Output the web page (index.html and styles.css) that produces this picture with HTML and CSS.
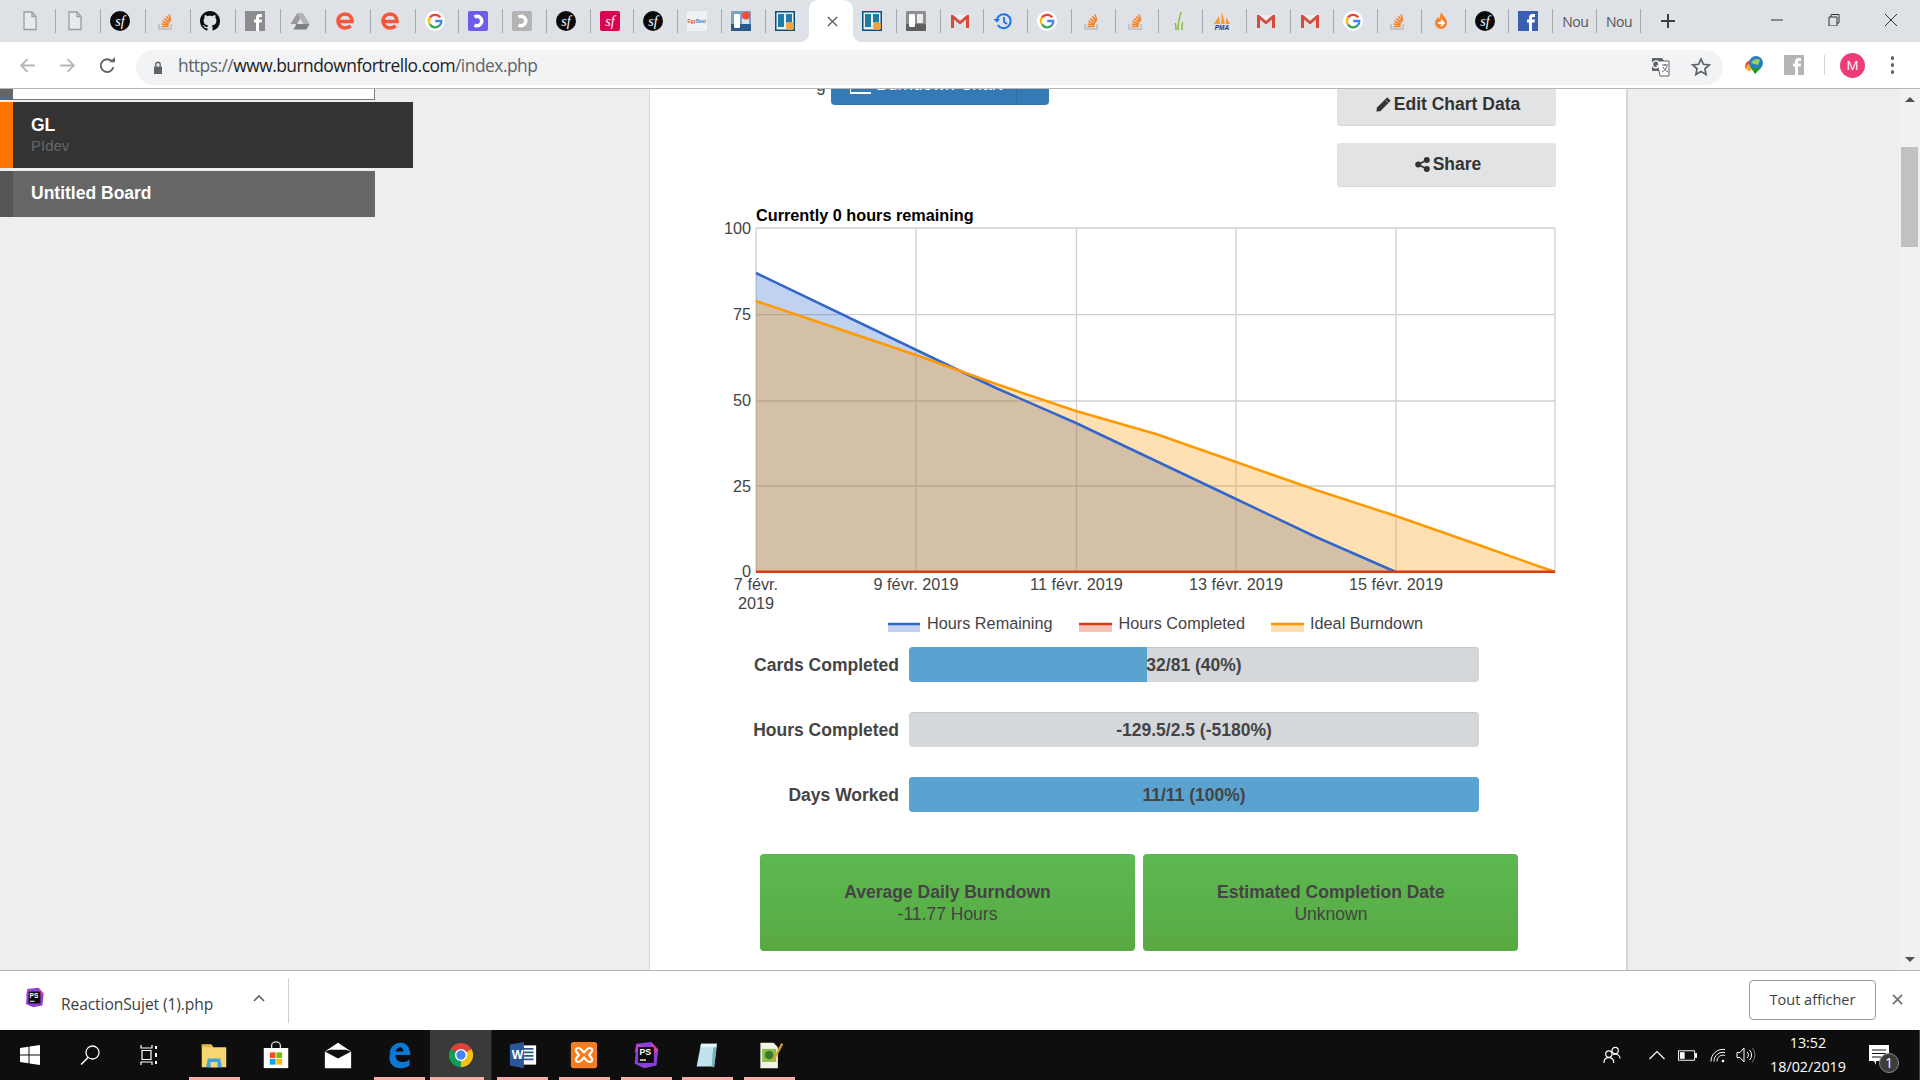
FILE: index.html
```html
<!DOCTYPE html>
<html lang="fr">
<head>
<meta charset="utf-8">
<title>Burndown for Trello</title>
<link rel="stylesheet" href="styles.css">
</head>
<body>
<svg class="defs" xmlns="http://www.w3.org/2000/svg">
  <symbol id="page" viewBox="0 0 20 20"><path d="M4 1h8l4 4.500V18.500H4z" fill="#e8eaed" stroke="#9a9da1" stroke-width="1.300"/><path d="M12 1v4.500h4" fill="none" stroke="#9a9da1" stroke-width="1.300"/></symbol>
  <symbol id="so" viewBox="0 0 20 20"><path d="M4 13v5h12v-5" fill="none" stroke="#bcbcbc" stroke-width="1.500"/><path d="M6.500 15.500h7M6.700 13l6.800 1M7.500 10.300l6.300 2.800M9 7.700l5.500 4M11.300 5.300l4 5.300M14 3.500l1.800 6" stroke="#f48024" stroke-width="1.500" fill="none"/></symbol>
  <symbol id="gh" viewBox="0 0 16 16"><path fill="#0d0d0d" d="M8 0C3.580 0 0 3.580 0 8c0 3.540 2.290 6.530 5.470 7.590.4.07.55-.17.55-.38 0-.19-.01-.82-.01-1.490-2.010.37-2.530-.49-2.690-.94-.09-.23-.48-.94-.82-1.130-.28-.15-.68-.52-.01-.53.63-.01 1.080.58 1.230.82.72 1.210 1.870.87 2.330.66.07-.52.28-.87.51-1.070-1.780-.2-3.640-.89-3.640-3.950 0-.87.31-1.590.82-2.150-.08-.2-.36-1.020.08-2.120 0 0 .67-.21 2.200.82.64-.18 1.320-.27 2-.27.68 0 1.360.09 2 .27 1.530-1.040 2.200-.82 2.200-.82.44 1.100.16 1.920.08 2.120.51.56.82 1.270.82 2.150 0 3.070-1.870 3.750-3.650 3.950.29.25.54.73.54 1.480 0 1.070-.01 1.930-.01 2.200 0 .21.15.46.55.38A8.013 8.013 0 0016 8c0-4.420-3.580-8-8-8z"/></symbol>
  <symbol id="fgray" viewBox="0 0 20 20"><rect width="20" height="20" fill="#8c8c8c"/><path fill="#fff" d="M11 20v-8.500H9V8.500h2V6.500C11 4 12.500 3 14.500 3H17v3h-1.500c-1 0-1.500.4-1.500 1.300v1.200h3l-.5 3H14V20z"/></symbol>
  <symbol id="flight" viewBox="0 0 20 20"><rect width="20" height="20" fill="#b5b5b5"/><path fill="#fff" d="M11 20v-8.500H9V8.500h2V6.500C11 4 12.500 3 14.500 3H17v3h-1.500c-1 0-1.500.4-1.500 1.300v1.200h3l-.5 3H14V20z"/></symbol>
  <symbol id="fblue" viewBox="0 0 20 20"><rect width="20" height="20" fill="#3b5fb0"/><path fill="#fff" d="M11 20v-8.500H9V8.500h2V6.500C11 4 12.500 3 14.500 3H17v3h-1.500c-1 0-1.500.4-1.500 1.300v1.200h3l-.5 3H14V20z"/></symbol>
  <symbol id="drive" viewBox="0 0 20 20"><path d="M7 2.500h6L7 13H0.500z" fill="#9a9a9a"/><path d="M7 2.500h6L19.500 13h-6z" fill="#b3b3b3"/><path d="M3.500 18.500L6.500 13h13l-3 5.500z" fill="#7f7f7f"/></symbol>
  <symbol id="e" viewBox="0 0 20 20"><path d="M3.500 10.500h13.500c0-4.500-3-7.500-7-7.500s-7 3-7 7 3 7 7 7c2.300 0 4.200-.8 5.700-2.300" fill="none" stroke="#f6573a" stroke-width="3.600"/></symbol>
  <symbol id="g" viewBox="0 0 20 20"><circle cx="10" cy="10" r="10" fill="#fff"/><path d="M15.200 6.400A6.300 6.300 0 0 0 5 6.500" fill="none" stroke="#ea4335" stroke-width="2.300"/><path d="M5 6.500a6.300 6.300 0 0 0 0 7" fill="none" stroke="#fbbc05" stroke-width="2.300"/><path d="M5 13.500a6.300 6.300 0 0 0 10 .6" fill="none" stroke="#34a853" stroke-width="2.300"/><path d="M15 14.100a6.300 6.300 0 0 0 1.300-4.100H10.200" fill="none" stroke="#4285f4" stroke-width="2.300"/></symbol>
  <symbol id="dp" viewBox="0 0 20 20"><rect width="20" height="20" rx="2" fill="#6d5ce8"/><path d="M6.500 6a4.700 4.700 0 1 1 0 8" fill="none" stroke="#fff" stroke-width="3.400"/></symbol>
  <symbol id="dpgray" viewBox="0 0 20 20"><rect width="20" height="20" rx="2" fill="#b3b3b3"/><path d="M6.500 6a4.700 4.700 0 1 1 0 8" fill="none" stroke="#fff" stroke-width="3.400"/></symbol>
  <symbol id="tphoto" viewBox="0 0 20 20"><rect width="20" height="20" fill="#7fa3bf"/><rect y="13" width="20" height="7" fill="#2a5a8a"/><rect x="3" y="3" width="6" height="14" rx="1" fill="#fff"/><rect x="11" y="7" width="7" height="6" fill="#d5e3ee"/><circle cx="15" cy="4.500" r="4" fill="#ef4d3c"/></symbol>
  <symbol id="tblue" viewBox="0 0 20 20"><rect width="20" height="20" fill="#0c4f75"/><rect x="1.500" y="1.500" width="17" height="17" fill="#e8eef2"/><rect x="3" y="3" width="6" height="13" fill="#1f7aa8"/><rect x="11" y="3" width="6" height="8.500" fill="#1f7aa8"/><circle cx="15" cy="15" r="4" fill="#f3a13c"/></symbol>
  <symbol id="tgray" viewBox="0 0 20 20"><rect width="20" height="20" rx="1" fill="#8f8f8f"/><rect y="13" width="20" height="7" rx="1" fill="#5f5f5f"/><rect x="3" y="3" width="6" height="13" rx="1" fill="#fff"/><rect x="11" y="3" width="6" height="9" rx="1" fill="#eee"/></symbol>
  <symbol id="gm" viewBox="0 0 20 20"><path d="M1 4h2l7 6 7-6h2v13h-3V8.500l-6 5-6-5V17H1z" fill="#d54b3d"/><path d="M4 4h12l-6 5z" fill="#f0efee"/></symbol>
  <symbol id="hist" viewBox="0 0 20 20"><path d="M4 8a7 7 0 1 1 .8 6" fill="none" stroke="#1a73e8" stroke-width="2"/><path d="M0.500 8H7L4 11.500z" fill="#1a73e8"/><path d="M11 6v5l3 2" fill="none" stroke="#1a73e8" stroke-width="1.800"/></symbol>
  <symbol id="leaf" viewBox="0 0 20 20"><path d="M13 1c-1.500 5-3 9-3 18M8 19c.3-3 0-5-1-7M14 19c0-3 0-5 .5-8" fill="none" stroke="#8fba4a" stroke-width="1.500"/></symbol>
  <symbol id="drop" viewBox="0 0 20 20"><path d="M10 1c1 3 6 6 6 11a6 6 0 0 1-12 0c0-3 2-4 3-6 1 1 1 2 1.500 2C9 6 9.500 3 10 1z" fill="#f5832a"/><path d="M7 12h5M10 9l3 3-3 3" fill="none" stroke="#fff" stroke-width="1.800"/></symbol>
  <symbol id="ps-bg" viewBox="0 0 32 32"><path d="M5 3l17-2 8 9-2 18-14 3-11-5z" fill="#8a3fd6"/><path d="M22 1l8 9-6 4z" fill="#e23fa0"/><path d="M3 14l2-11 8 3z" fill="#c23fd0"/><rect x="7" y="7" width="18" height="18" fill="#0c0c0c"/><rect x="9" y="21" width="7" height="1.500" fill="#fff"/></symbol>
  <symbol id="chrome" viewBox="0 0 32 32"><path d="M16 16L4 9a14 14 0 0 1 24 0z" fill="#db4437"/><path d="M16 16l12-7a14 14 0 0 1-12 21z" fill="#f4c20d"/><path d="M16 16v14A14 14 0 0 1 4 9z" fill="#0f9d58"/><circle cx="16" cy="16" r="7" fill="#fff"/><circle cx="16" cy="16" r="5.300" fill="#4285f4"/></symbol>
  <symbol id="folder" viewBox="0 0 32 32"><path d="M2 4h11l2 3h15v23H2z" fill="#f6d66f"/><path d="M2 4h11l2 3H2z" fill="#e3b94c"/><path d="M9 20h14l2 10H7z" fill="#3aa6dd"/><rect x="12" y="24" width="8" height="6" fill="#f6d66f"/></symbol>
  <symbol id="store" viewBox="0 0 32 32"><path d="M2 8h28v23H2z" fill="#fff"/><path d="M11 8V5a5 4 0 0 1 10 0v3" fill="none" stroke="#ddd" stroke-width="1.500"/><rect x="9" y="13" width="6.500" height="6.500" fill="#f25022"/><rect x="16.500" y="13" width="6.500" height="6.500" fill="#7fba00"/><rect x="9" y="20.500" width="6.500" height="6.500" fill="#00a4ef"/><rect x="16.500" y="20.500" width="6.500" height="6.500" fill="#ffb900"/></symbol>
  <symbol id="mail" viewBox="0 0 32 32"><path d="M1 12L16 2l15 10v19H1z" fill="#fff"/><path d="M1 12l15 8 15-8-6-2H7z" fill="#0e0e0e"/><path d="M8 11h16l-8 6z" fill="#0e0e0e"/></symbol>
  <symbol id="edge" viewBox="0 0 32 32"><path d="M5 14C6 7 11 2 18 2c7 0 11 6 11 14H12c0 5 3 8 8 8 3 0 6-1 8-3v7c-3 2-6 3-10 3-8 0-13-5-13-12 0-2 .5-4 2-6-2 1-2 1-2 1zm7-2h9c0-3-2-5-4-5s-4 2-5 5z" fill="#0a78d4"/></symbol>
  <symbol id="word-bg" viewBox="0 0 32 32"><rect x="11" y="5" width="20" height="22" fill="#fff"/><path d="M14 9h14M14 13h14M14 17h14M14 21h14" stroke="#2b579a" stroke-width="2"/><path d="M1 4l16-3v30L1 28z" fill="#2b579a"/></symbol>
  <symbol id="xampp" viewBox="0 0 32 32"><rect x="1" y="1" width="30" height="30" rx="3" fill="#f57c20"/><path d="M10 8c-3 0-4 2-3 4l3 4-3 4c-1 2 0 4 3 4 2 0 3-2 6-5 3 3 4 5 6 5 3 0 4-2 3-4l-3-4 3-4c1-2 0-4-3-4-2 0-3 2-6 5-3-3-4-5-6-5z" fill="none" stroke="#fff" stroke-width="2.500"/></symbol>
  <symbol id="note" viewBox="0 0 32 32"><path d="M8 3h18l-3 26H3z" fill="#bfe4ee"/><path d="M8 3h18l-.5 4H7.500z" fill="#e8f3f5"/><path d="M22 7l4 0-3 23-3-1z" fill="#7ab0c2"/></symbol>
  <symbol id="last" viewBox="0 0 32 32"><path d="M5 2h15l5 5v24H5z" fill="#f2f2e8"/><rect x="7" y="9" width="16" height="15" fill="#8cc152"/><circle cx="15" cy="16" r="5" fill="#3a7a2a"/><path d="M20 22L30 3" stroke="#e0a020" stroke-width="2.500"/></symbol>
</svg>

<header class="tabstrip">
  <div class="tab wide"><svg class="fav"><use href="#page"/></svg></div>
  <div class="tab wide"><svg class="fav"><use href="#page"/></svg></div>
  <div class="tab wide"><svg class="fav" viewBox="0 0 20 20"><circle cx="10" cy="10" r="10" fill="#0a0a0a"/><text x="10" y="14.500" class="logo-sf">sf</text></svg></div>
  <div class="tab wide"><svg class="fav"><use href="#so"/></svg></div>
  <div class="tab wide"><svg class="fav"><use href="#gh"/></svg></div>
  <div class="tab wide"><svg class="fav"><use href="#fgray"/></svg></div>
  <div class="tab wide"><svg class="fav"><use href="#drive"/></svg></div>
  <div class="tab wide"><svg class="fav"><use href="#e"/></svg></div>
  <div class="tab wide"><svg class="fav"><use href="#e"/></svg></div>
  <div class="tab"><svg class="fav"><use href="#g"/></svg></div>
  <div class="tab"><svg class="fav"><use href="#dp"/></svg></div>
  <div class="tab"><svg class="fav"><use href="#dpgray"/></svg></div>
  <div class="tab"><svg class="fav" viewBox="0 0 20 20"><circle cx="10" cy="10" r="10" fill="#0a0a0a"/><text x="10" y="14.500" class="logo-sf">sf</text></svg></div>
  <div class="tab"><svg class="fav" viewBox="0 0 20 20"><rect width="20" height="20" rx="2" fill="#d9044f"/><text x="10" y="14.500" class="logo-sf">sf</text></svg></div>
  <div class="tab"><svg class="fav" viewBox="0 0 20 20"><circle cx="10" cy="10" r="10" fill="#0a0a0a"/><text x="10" y="14.500" class="logo-sf">sf</text></svg></div>
  <div class="tab"><svg class="fav" viewBox="0 0 20 20"><rect width="20" height="20" fill="#eef2f5"/><text x="0.500" y="11.500" class="logo-egy"><tspan fill="#e0542e">Egy</tspan><tspan fill="#2a83b8">Best</tspan></text></svg></div>
  <div class="tab"><svg class="fav"><use href="#tphoto"/></svg></div>
  <div class="tab nosep"><svg class="fav"><use href="#tblue"/></svg></div>
  <div class="tab-active"><svg class="x-mark" viewBox="0 0 12 12"><path d="M1 1l10 10M11 1L1 11"/></svg></div>
  <div class="tab"><svg class="fav"><use href="#tblue"/></svg></div>
  <div class="tab"><svg class="fav"><use href="#tgray"/></svg></div>
  <div class="tab"><svg class="fav"><use href="#gm"/></svg></div>
  <div class="tab"><svg class="fav"><use href="#hist"/></svg></div>
  <div class="tab"><svg class="fav"><use href="#g"/></svg></div>
  <div class="tab"><svg class="fav"><use href="#so"/></svg></div>
  <div class="tab"><svg class="fav"><use href="#so"/></svg></div>
  <div class="tab"><svg class="fav"><use href="#leaf"/></svg></div>
  <div class="tab"><svg class="fav" viewBox="0 0 20 20"><path d="M2 13L7 5l1 8zM9 13l1-12 3 12zM14 13l0-7 4 7z" fill="#f29a30"/><text x="10" y="19" class="logo-pma">PMA</text></svg></div>
  <div class="tab"><svg class="fav"><use href="#gm"/></svg></div>
  <div class="tab"><svg class="fav"><use href="#gm"/></svg></div>
  <div class="tab"><svg class="fav"><use href="#g"/></svg></div>
  <div class="tab"><svg class="fav"><use href="#so"/></svg></div>
  <div class="tab"><svg class="fav"><use href="#drop"/></svg></div>
  <div class="tab"><svg class="fav" viewBox="0 0 20 20"><circle cx="10" cy="10" r="10" fill="#0a0a0a"/><text x="10" y="14.500" class="logo-sf">sf</text></svg></div>
  <div class="tab"><svg class="fav"><use href="#fblue"/></svg></div>
  <div class="tab"><span class="tab-title">Nou</span></div>
  <div class="tab"><span class="tab-title">Nou</span></div>
  <div class="newtab"><svg viewBox="0 0 14 14"><path d="M7 0v14M0 7h14"/></svg></div>
  <div class="winctl">
    <div class="winbtn"><svg viewBox="0 0 12 12"><path d="M0 6h12"/></svg></div>
    <div class="winbtn"><svg viewBox="0 0 12 12"><path d="M1 3h8v9H1zM3 3V0.500h8V9H9"/></svg></div>
    <div class="winbtn"><svg viewBox="0 0 12 12"><path d="M0 0l12 12M12 0L0 12"/></svg></div>
  </div>
</header>

<div class="toolbar">
  <div class="navbtn"><svg viewBox="0 0 16 16"><path class="nav-off" d="M15 8H2M8 2L2 8l6 6"/></svg></div>
  <div class="navbtn"><svg viewBox="0 0 16 16"><path class="nav-off" d="M1 8h13M8 2l6 6-6 6"/></svg></div>
  <div class="navbtn"><svg viewBox="0 0 16 16"><path class="nav-on" d="M13.500 9.500A6 6 0 1 1 12 4"/><path class="nav-fill" d="M10 5h5V0z"/></svg></div>
  <div class="omnibox">
    <svg class="lock" viewBox="0 0 10 13"><path d="M1 5.500h8V13H1z"/><path class="lock-bow" d="M2.800 5.500V3.500a2.200 2.200 0 0 1 4.400 0v2"/></svg>
    <div class="url"><span class="url-dim">https://</span>www.burndownfortrello.com<span class="url-dim">/index.php</span></div>
    <div class="omni-icon"><svg viewBox="0 0 20 20"><path d="M1 1h10l2 3v10H1z" fill="#5f6368"/><path d="M6 4h12v15H9z" fill="#fff" stroke="#5f6368"/><path d="M9.500 5a3.500 3.500 0 1 0 .6 4H7.500" fill="none" stroke="#fff" stroke-width="1.300" transform="translate(-2 0)"/><path d="M11 8h6M14 7v2M16 9c-1 3-3 5-5 6M12 10c1 2 3 4 5 5" stroke="#5f6368" fill="none"/></svg></div>
    <div class="omni-icon"><svg viewBox="0 0 20 20"><path d="M10 2l2.400 5.300 5.800.6-4.300 3.900 1.200 5.700-5.100-2.900-5.100 2.900 1.200-5.700L1.800 7.900l5.800-.6z" fill="none" stroke="#5f6368" stroke-width="1.700"/></svg></div>
  </div>
  <div class="ext"><svg viewBox="0 0 20 20"><path d="M1 12a8 7 0 0 1 6-7l2 7-3 4a6 6 0 0 1-5-4z" fill="#e04c3c"/><path d="M2 14a7 6 0 0 1 5-6l2 5-4 3z" fill="#f5b52e"/><circle cx="12" cy="8" r="7" fill="#2c7fc0"/><path d="M7 8c2-4 7-5 9-3l-2 5z" fill="#9ad06a"/><path d="M7 13h10l-6 6z" fill="#1c9a2a"/></svg></div>
  <div class="ext"><svg class="ext-f"><use href="#flight"/></svg></div>
  <div class="tb-sep"></div>
  <div class="avatar">M</div>
  <div class="dots"><span></span><span></span><span></span></div>
</div>

<main class="page">
  <aside class="sidebar">
    <div class="board-stub"><span class="stub-edge"></span><span class="stub-body"></span></div>
    <div class="board board-on">
      <strong>GL</strong>
      <span class="board-sub">PIdev</span>
    </div>
    <div class="board board-off"><strong>Untitled Board</strong></div>
  </aside>

  <section class="panel">
    <div class="top-row">
      <span class="clipped-g">g</span>
      <div class="split-btn">
        <div class="split-main"><span class="chart-glyph"></span>Burndown Chart</div>
        <div class="split-caret"></div>
      </div>
      <div class="action-col">
        <div class="action-btn action-edit"><svg viewBox="0 0 14 14"><path d="M10.500 0L14 3.500 4 13.500 0 14l.5-4zM9 3l2.500 2.500" fill="#333" stroke="#e2e3e5" stroke-width=".6"/></svg>Edit Chart Data</div>
        <div class="action-btn action-share"><svg viewBox="0 0 14 14"><circle cx="3" cy="7" r="2.800"/><circle cx="11" cy="2.800" r="2.800"/><circle cx="11" cy="11.200" r="2.800"/><path d="M3 7l8-4.200M3 7l8 4.200" stroke="#333" stroke-width="1.500"/></svg>Share</div>
      </div>
    </div>

    <svg class="chart" viewBox="650 188 977 450" xmlns="http://www.w3.org/2000/svg">
      <text x="756" y="221" class="c-title">Currently 0 hours remaining</text>
      <g class="c-grid">
        <path d="M756 228H1555M756 314.600H1555M756 401H1555M756 486H1555"/>
        <path d="M756 228V572M916 228V572M1076.500 228V572M1236 228V572M1396 228V572M1555 228V572"/>
      </g>
      <polygon class="a-blue" points="756,273 956,369 996,388 1076,423 1156,461 1236,499 1316,537 1396,572 756,572"/>
      <polygon class="a-orange" points="756,301 836,328 916,355 996,384 1076,411 1156,434 1236,462 1316,490 1396,516 1476,544 1555,572 756,572"/>
      <polyline class="l-blue" points="756,273 956,369 996,388 1076,423 1156,461 1236,499 1316,537 1396,572"/>
      <polyline class="l-orange" points="756,301 836,328 916,355 996,384 1076,411 1156,434 1236,462 1316,490 1396,516 1476,544 1555,572"/>
      <path class="l-red" d="M756 571.700H1555"/>
      <g class="c-yaxis">
        <text x="751" y="234">100</text>
        <text x="751" y="320">75</text>
        <text x="751" y="406">50</text>
        <text x="751" y="492">25</text>
        <text x="751" y="577">0</text>
      </g>
      <g class="c-xaxis">
        <text x="756" y="590">7 févr.</text>
        <text x="756" y="609">2019</text>
        <text x="916" y="590">9 févr. 2019</text>
        <text x="1076.500" y="590">11 févr. 2019</text>
        <text x="1236" y="590">13 févr. 2019</text>
        <text x="1396" y="590">15 févr. 2019</text>
      </g>
      <g class="c-legend">
        <rect x="888" y="623" width="32" height="9" class="sw-blue"/><path d="M888 624H920" class="l-blue"/>
        <text x="927" y="629">Hours Remaining</text>
        <rect x="1079" y="623" width="33" height="9" class="sw-red"/><path d="M1079 624H1112" class="l-red"/>
        <text x="1118.500" y="629">Hours Completed</text>
        <rect x="1271" y="623" width="33" height="9" class="sw-orange"/><path d="M1271 624H1304" class="l-orange"/>
        <text x="1310" y="629">Ideal Burndown</text>
      </g>
    </svg>

    <div class="stats">
      <div class="stat-row">
        <div class="stat-label">Cards Completed</div>
        <div class="stat-bar"><div class="stat-fill" style="width:41.7%"></div><div class="stat-text">32/81 (40%)</div></div>
      </div>
      <div class="stat-row">
        <div class="stat-label">Hours Completed</div>
        <div class="stat-bar"><div class="stat-text">-129.5/2.5 (-5180%)</div></div>
      </div>
      <div class="stat-row">
        <div class="stat-label">Days Worked</div>
        <div class="stat-bar"><div class="stat-fill" style="width:100%"></div><div class="stat-text">11/11 (100%)</div></div>
      </div>
    </div>

    <div class="tiles">
      <div class="tile"><strong>Average Daily Burndown</strong><span>-11.77 Hours</span></div>
      <div class="tile"><strong>Estimated Completion Date</strong><span>Unknown</span></div>
    </div>
  </section>

  <div class="gutter"></div>

  <div class="scrollbar">
    <div class="sb-arrow sb-up"></div>
    <div class="sb-thumb"></div>
    <div class="sb-arrow sb-down"></div>
  </div>
</main>

<div class="downloads">
  <div class="dl-item">
    <svg class="dl-icon" viewBox="0 0 32 32"><use href="#ps-bg"/><text x="8.500" y="16.500" class="logo-ps">PS</text></svg>
    <span class="dl-name">ReactionSujet (1).php</span>
    <svg class="dl-chev" viewBox="0 0 12 8"><path d="M1 7l5-5 5 5"/></svg>
  </div>
  <div class="dl-sep"></div>
  <div class="dl-all">Tout afficher</div>
  <div class="dl-close"><svg viewBox="0 0 12 12"><path d="M1 1l10 10M11 1L1 11"/></svg></div>
</div>

<footer class="taskbar">
  <div class="tk-sys"><svg viewBox="0 0 20 20"><path d="M0 3l8.500-1.200V9.500H0zM9.500 1.600L20 0v9.500H9.500zM0 10.500h8.500v7.700L0 17zM9.500 10.500H20V20l-10.500-1.600z" fill="#fff"/></svg></div>
  <div class="tk-sys"><svg viewBox="0 0 20 20"><circle cx="12.500" cy="7.500" r="6.500" fill="none" stroke="#fff" stroke-width="1.300"/><path d="M8 12.500L1 19.500" stroke="#fff" stroke-width="1.500"/></svg></div>
  <div class="tk-sys"><svg viewBox="0 0 20 20"><path d="M1 0v3h11V0M2 5.500h9v9H2zM1 20v-3h11v3" fill="none" stroke="#fff" stroke-width="1.200"/><path d="M16 1v3M16 8v4M16 16v3" stroke="#fff" stroke-width="2"/></svg></div>
  <div class="tk-app open"><svg><use href="#folder"/></svg></div>
  <div class="tk-app"><svg><use href="#store"/></svg></div>
  <div class="tk-app"><svg><use href="#mail"/></svg></div>
  <div class="tk-app open"><svg><use href="#edge"/></svg></div>
  <div class="tk-app open active"><svg><use href="#chrome"/></svg></div>
  <div class="tk-app open"><svg viewBox="0 0 32 32"><use href="#word-bg"/><text x="3" y="21" class="logo-w">W</text></svg></div>
  <div class="tk-app open"><svg><use href="#xampp"/></svg></div>
  <div class="tk-app open"><svg viewBox="0 0 32 32"><use href="#ps-bg"/><text x="8.500" y="16.500" class="logo-ps">PS</text></svg></div>
  <div class="tk-app open"><svg><use href="#note"/></svg></div>
  <div class="tk-app open"><svg><use href="#last"/></svg></div>
  <div class="tray">
    <div class="tr-people"><svg viewBox="0 0 20 20"><circle cx="13.500" cy="5" r="3.500"/><circle cx="6.500" cy="9" r="3.500"/><path d="M1 19c0-3.500 2-6 5.500-6s5.500 2.500 5.500 6M11 9.500c1-.5 1.500-.5 2.500-.5 3 0 5.500 2 5.500 5"/></svg></div>
    <div class="tr-chev"><svg viewBox="0 0 16 10"><path d="M0.500 9L8 1.500 15.500 9"/></svg></div>
    <div class="tr-batt"><svg viewBox="0 0 20 11"><path class="bt-o" d="M0.500 0.500h17v10H.5z"/><rect x="2" y="2" width="5" height="7"/><rect x="18" y="3" width="2" height="5"/></svg></div>
    <div class="tr-wifi"><svg viewBox="0 0 16 14"><path d="M1 13a12 12 0 0 1 14-12M4 13a9 9 0 0 1 11-9M7 13a6 6 0 0 1 8-6"/><circle cx="13" cy="12.500" r="1.300"/></svg></div>
    <div class="tr-snd"><svg viewBox="0 0 20 16"><path d="M1 5.500h3L8 1v14l-4-4.500H1z"/><path d="M11 5a4 4 0 0 1 0 6M13.500 3a7 7 0 0 1 0 10"/><path class="snd-dim" d="M16 0.500a11 11 0 0 1 0 15"/></svg></div>
    <div class="clock"><span>13:52</span><span>18/02/2019</span></div>
    <div class="tr-notif">
      <svg viewBox="0 0 22 22"><path d="M1 1h20v16H8v4l-2-4H1z" fill="#fff"/><path d="M4 6h14M4 9.500h14M4 13h9" stroke="#111" stroke-width="1"/></svg>
      <span class="badge">1</span>
    </div>
    <div class="tr-peek"></div>
  </div>
</footer>
</body>
</html>
```

FILE: styles.css
```css
* { box-sizing: border-box; }
html, body { margin: 0; padding: 0; }
body {
  width: 1920px;
  height: 1080px;
  overflow: hidden;
  display: flex;
  flex-direction: column;
  font-family: "Liberation Sans", Arial, sans-serif;
  background: #fff;
}
.defs { display: block; width: 0; height: 0; flex: none; overflow: hidden; }
.logo-sf { font: italic 14px "Liberation Serif", serif; fill: #fff; text-anchor: middle; }
.logo-egy { font: bold 4.600px "Liberation Sans", sans-serif; }
.logo-pma { font: italic bold 6.500px "Liberation Sans", sans-serif; fill: #2c3470; text-anchor: middle; }
.logo-ps { font: bold 10px "Liberation Sans", sans-serif; fill: #fff; }
.logo-w { font: bold 14px "Liberation Sans", sans-serif; fill: #fff; }

/* tab strip */
.tabstrip {
  flex: none;
  height: 42px;
  background: #dee1e6;
  display: flex;
  padding-left: 10.700px;
}
.tab {
  flex: none;
  width: 43.750px;
  height: 42px;
  display: flex;
  align-items: center;
  justify-content: space-between;
  padding-left: 9px;
}
.tab.wide { width: 45px; }
.tab::after {
  content: "";
  flex: none;
  width: 1px;
  height: 24px;
  background: #a6a9ad;
}
.tab.nosep::after { background: transparent; }
.fav { flex: none; width: 20px; height: 20px; }
.tab-title {
  flex: none;
  width: 26px;
  white-space: nowrap;
  font: 14px "Open Sans", sans-serif;
  letter-spacing: -0.500px;
  color: #555;
}
.tab-active {
  flex: none;
  position: relative;
  width: 43.750px;
  height: 42px;
  background: #fff;
  border-radius: 9px 9px 0 0;
  display: flex;
  align-items: center;
  justify-content: center;
}
.tab-active::before, .tab-active::after {
  content: "";
  position: absolute;
  bottom: 0;
  width: 8px;
  height: 8px;
}
.tab-active::before { left: -8px; background: radial-gradient(circle at 0 0, transparent 7.500px, #fff 8px); }
.tab-active::after { right: -8px; background: radial-gradient(circle at 100% 0, transparent 7.500px, #fff 8px); }
.x-mark { width: 11px; height: 11px; fill: none; stroke: #5f6368; stroke-width: 1.500; margin-left: 2px; }
.newtab { flex: none; width: 52px; margin-left: 1px; display: flex; align-items: center; justify-content: center; }
.newtab svg { width: 14px; height: 14px; fill: none; stroke: #3c4043; stroke-width: 2; }
.winctl { margin-left: auto; display: flex; margin-right: 1px; }
.winbtn { width: 56.700px; display: flex; align-items: center; justify-content: center; padding-bottom: 3px; }
.winbtn svg { width: 12px; height: 12px; fill: none; stroke: #333; stroke-width: 1; }

/* toolbar */
.toolbar {
  flex: none;
  height: 46px;
  background: #fff;
  display: flex;
  align-items: center;
  padding-left: 7px;
}
.navbtn { flex: none; width: 40px; height: 46px; display: flex; align-items: center; justify-content: center; }
.navbtn svg { width: 17px; height: 17px; }
.nav-off { fill: none; stroke: #b4b6b9; stroke-width: 1.700; }
.nav-on { fill: none; stroke: #5f6368; stroke-width: 1.800; }
.nav-fill { fill: #5f6368; }
.omnibox {
  flex: none;
  width: 1587px;
  height: 35px;
  margin-left: 9px;
  margin-top: 5px;
  margin-bottom: 1px;
  border-radius: 18px;
  background: #f1f3f4;
  display: flex;
  align-items: center;
  padding-left: 17px;
  padding-right: 2px;
}
.lock { flex: none; width: 10px; height: 13px; fill: #5f6368; }
.lock-bow { fill: none; stroke: #5f6368; stroke-width: 1.400; }
.url {
  margin-left: 15px;
  margin-top: -5px;
  font: 17.400px "Open Sans", sans-serif;
  letter-spacing: -0.510px;
  color: #202124;
  white-space: nowrap;
}
.url-dim { color: #5f6368; }
.omni-icon { flex: none; width: 40px; display: flex; justify-content: center; }
.url + .omni-icon { margin-left: auto; }
.omni-icon svg { width: 20px; height: 20px; }
.ext { flex: none; width: 40px; display: flex; justify-content: center; }
.omnibox + .ext { margin-left: 11px; }
.ext svg { width: 20px; height: 20px; }
.tb-sep { flex: none; width: 1px; height: 20px; margin: 0 15.500px 0 9.500px; background: #d5d6d8; }
.avatar {
  flex: none;
  width: 25px;
  height: 25px;
  border-radius: 50%;
  background: #ec3d7a;
  color: #fff;
  font: 13.500px "Open Sans", sans-serif;
  display: flex;
  align-items: center;
  justify-content: center;
}
.dots { flex: none; margin-left: 25.500px; display: flex; flex-direction: column; gap: 3.500px; }
.dots span { width: 3.500px; height: 3.500px; border-radius: 50%; background: #5f6368; }

/* page */
.page {
  flex: none;
  height: 882px;
  display: flex;
  overflow: hidden;
  background: #eee;
  border-top: 1px solid #b6b6b6;
}
.sidebar { flex: none; width: 649px; display: flex; flex-direction: column; align-items: flex-start; }
.board-stub { width: 375px; height: 11px; display: flex; }
.stub-edge { width: 13px; background: #666; }
.stub-body { flex: 1; background: #fff; border-right: 1px solid #777; border-bottom: 1px solid #777; }
.board { color: #fff; font-size: 17.500px; line-height: 22px; }
.board strong { display: block; }
.board-on {
  width: 413px;
  height: 66px;
  margin-top: 2px;
  padding-top: 12px;
  padding-left: 18px;
  background: #333;
  border-left: 13px solid #ff7300;
}
.board-sub { display: block; font-size: 15px; line-height: 19px; color: #666; }
.board-off {
  width: 375px;
  height: 46px;
  margin-top: 3px;
  padding-left: 18px;
  padding-top: 11px;
  background: #666;
  border-left: 13px solid #555;
}

.panel {
  flex: none;
  width: 979px;
  background: #fff;
  border-left: 1px solid #d8d8d8;
  border-right: 2px solid #d8d8d8;
  display: flex;
  flex-direction: column;
}
.top-row { flex: none; height: 99px; display: flex; align-items: flex-start; }
.clipped-g { flex: none; width: 17px; margin-left: 166px; margin-top: -14px; font-size: 17.500px; line-height: 20px; color: #444; }
.split-btn {
  flex: none;
  display: flex;
  width: 218px;
  height: 46px;
  margin-top: -30px;
  margin-left: -2px;
  border-radius: 0 0 4px 4px;
  overflow: hidden;
  background: #337ab7;
}
.split-main {
  flex: 1;
  color: #fff;
  font-size: 17.500px;
  line-height: 20px;
  padding-top: 15px;
  padding-left: 19px;
  display: flex;
  align-items: flex-start;
  gap: 5px;
}
.chart-glyph { flex: none; width: 21px; height: 18px; margin-top: 2px; border-left: 1px solid #fff; border-bottom: 2px solid #fff; }
.split-caret { flex: none; width: 33px; border-left: 1px solid #2e6da4; }
.action-col { margin-left: auto; margin-right: 70px; width: 219px; display: flex; flex-direction: column; gap: 17px; margin-top: -7px; }
.action-btn {
  height: 44px;
  background: #e2e3e5;
  border-bottom: 1px solid #d9dadc;
  border-radius: 3px;
  color: #333;
  font-size: 17.500px;
  font-weight: bold;
  display: flex;
  align-items: center;
  justify-content: center;
  gap: 3px;
  padding-left: 3px;
}
.action-edit { padding-top: 1px; }
.action-share { padding-bottom: 1px; }
.action-btn svg { flex: none; width: 15px; height: 15px; fill: #333; }

.chart { display: block; flex: none; width: 977px; height: 450px; }
.c-title { font: bold 16.250px "Liberation Sans", sans-serif; fill: #000; }
.c-grid path { fill: none; stroke: #cfcfcf; stroke-width: 1.300; }
.a-blue { fill: #3366cc; fill-opacity: .3; }
.a-orange { fill: #ff9900; fill-opacity: .3; }
.l-blue { fill: none; stroke: #3366cc; stroke-width: 2.500; }
.l-orange { fill: none; stroke: #ff9900; stroke-width: 2.500; }
.l-red { fill: none; stroke: #dc3912; stroke-width: 2.500; }
.sw-blue { fill: #3366cc; fill-opacity: .3; }
.sw-red { fill: #dc3912; fill-opacity: .3; }
.sw-orange { fill: #ff9900; fill-opacity: .3; }
.c-yaxis text { font: 16.250px "Liberation Sans", sans-serif; fill: #444; text-anchor: end; }
.c-xaxis text { font: 16.250px "Liberation Sans", sans-serif; fill: #444; text-anchor: middle; }
.c-legend text { font: 16.250px "Liberation Sans", sans-serif; fill: #444; }

.stats { flex: none; margin-top: 9px; display: flex; flex-direction: column; gap: 30px; }
.stat-row { display: flex; align-items: center; gap: 10px; height: 35px; }
.stat-label { flex: none; width: 249px; padding-top: 2px; text-align: right; font-size: 17.500px; font-weight: bold; color: #444; }
.stat-bar {
  flex: none;
  display: grid;
  width: 570px;
  height: 35px;
  background: #d5d8db;
  border-radius: 4px;
  overflow: hidden;
  box-shadow: inset 0 1px 1px rgba(0,0,0,.08);
}
.stat-fill, .stat-text { grid-area: 1 / 1; }
.stat-fill { background: #5aa3d0; box-shadow: inset 0 -2px 0 rgba(0,0,0,.14); }
.stat-text { text-align: center; line-height: 37px; font-size: 17.500px; font-weight: bold; color: #444; }

.tiles { flex: none; display: flex; gap: 8.400px; margin-top: 42px; margin-left: 110px; }
.tile {
  flex: none;
  width: 375px;
  height: 97px;
  border-radius: 4px;
  background: linear-gradient(#5cb950, #59a943);
  color: #444;
  font-size: 17.500px;
  line-height: 22px;
  display: flex;
  flex-direction: column;
  align-items: center;
  justify-content: center;
  padding-top: 1px;
}
.gutter { flex: 1; background: #eee; }
.scrollbar { flex: none; width: 21px; background: #f1f1f1; display: flex; flex-direction: column; align-items: center; }
.sb-arrow { flex: none; width: 0; height: 0; border-left: 5px solid transparent; border-right: 5px solid transparent; }
.sb-up { margin-top: 8px; border-bottom: 5px solid #505050; }
.sb-thumb { flex: none; width: 17px; height: 100px; margin-top: 45px; background: #c1c1c1; }
.sb-down { margin-top: auto; margin-bottom: 8px; border-top: 5px solid #505050; }

/* downloads */
.downloads {
  flex: none;
  height: 60px;
  background: #fff;
  border-top: 1px solid #b6b6b6;
  display: flex;
  align-items: center;
}
.dl-item { flex: none; width: 288px; display: flex; align-items: center; padding-left: 24px; }
.dl-icon { flex: none; width: 21px; height: 21px; margin-top: -6px; }
.dl-name { flex: none; margin-left: 16px; font: 15.600px "Open Sans", sans-serif; color: #3c4043; margin-top: 6px; letter-spacing: -0.100px; }
.dl-chev { flex: none; width: 12px; height: 8px; margin-left: auto; margin-right: 23px; margin-top: -6px; fill: none; stroke: #5f6368; stroke-width: 1.600; }
.dl-sep { flex: none; width: 1px; height: 45px; background: #d0d0d0; }
.dl-all {
  flex: none;
  margin-left: auto;
  margin-bottom: 2px;
  width: 127px;
  height: 40px;
  border: 1px solid #9a9a9a;
  border-radius: 4px;
  display: flex;
  align-items: center;
  justify-content: center;
  font: 14.500px "Open Sans", sans-serif;
  color: #3c4043;
}
.dl-close { flex: none; width: 44px; margin-bottom: 2px; padding-right: 1px; display: flex; justify-content: center; }
.dl-close svg { width: 11px; height: 11px; fill: none; stroke: #6b6e72; stroke-width: 1.800; }

/* taskbar */
.taskbar { flex: none; height: 50px; background: #0e0e0e; display: flex; align-items: stretch; }
.tk-sys { flex: none; width: 60px; display: flex; align-items: center; justify-content: center; }
.tk-sys svg { width: 20px; height: 20px; }
.tk-sys:nth-child(3) { margin-right: 3.500px; }
.tk-app { flex: none; width: 61.700px; display: flex; align-items: center; justify-content: center; }
.tk-app svg { width: 28px; height: 28px; }
.tk-app.open { background: linear-gradient(#f8aea5, #f8aea5) center bottom / 51px 3px no-repeat; }
.tk-app.active {
  background: linear-gradient(#f8aea5, #f8aea5) left bottom / 54px 3px no-repeat, #3a3a3a;
  border-right: 1px solid #222;
}
.tray { margin-left: auto; display: flex; align-items: center; color: #fff; }
.tray svg { display: block; }
.tr-people { width: 40px; margin-right: 10px; display: flex; justify-content: center; }
.tr-people svg { width: 18px; height: 18px; fill: none; stroke: #fff; stroke-width: 1.300; }
.tr-chev { width: 30px; display: flex; justify-content: center; }
.tr-chev svg { width: 16px; height: 10px; fill: none; stroke: #fff; stroke-width: 1.200; }
.tr-batt { width: 30px; display: flex; justify-content: center; }
.tr-batt svg { width: 19px; height: 11px; fill: #fff; }
.bt-o { fill: none; stroke: #fff; }
.tr-wifi { width: 31px; display: flex; justify-content: center; }
.tr-wifi svg { width: 16px; height: 15px; fill: none; stroke: #fff; stroke-width: 1; }
.tr-wifi circle { fill: #fff; stroke: none; }
.tr-snd { width: 26px; display: flex; justify-content: center; }
.tr-snd svg { width: 20px; height: 16px; fill: none; stroke: #fff; stroke-width: 1; }
.snd-dim { stroke: #777; }
.clock { width: 98px; display: flex; flex-direction: column; align-items: center; gap: 4px; font: 14.300px/20px "Open Sans", sans-serif; }
.tr-notif { position: relative; width: 44px; display: flex; justify-content: center; }
.tr-notif svg { width: 22px; height: 22px; }
.badge {
  position: absolute;
  left: 22px;
  top: 9px;
  width: 20px;
  height: 20px;
  border-radius: 50%;
  background: #3c3c3c;
  border: 1px solid #888;
  font: 14px/18px "Open Sans", sans-serif;
  text-align: center;
  color: #fff;
}
.tr-peek { width: 19px; align-self: stretch; border-right: 1px solid #444; }
```
